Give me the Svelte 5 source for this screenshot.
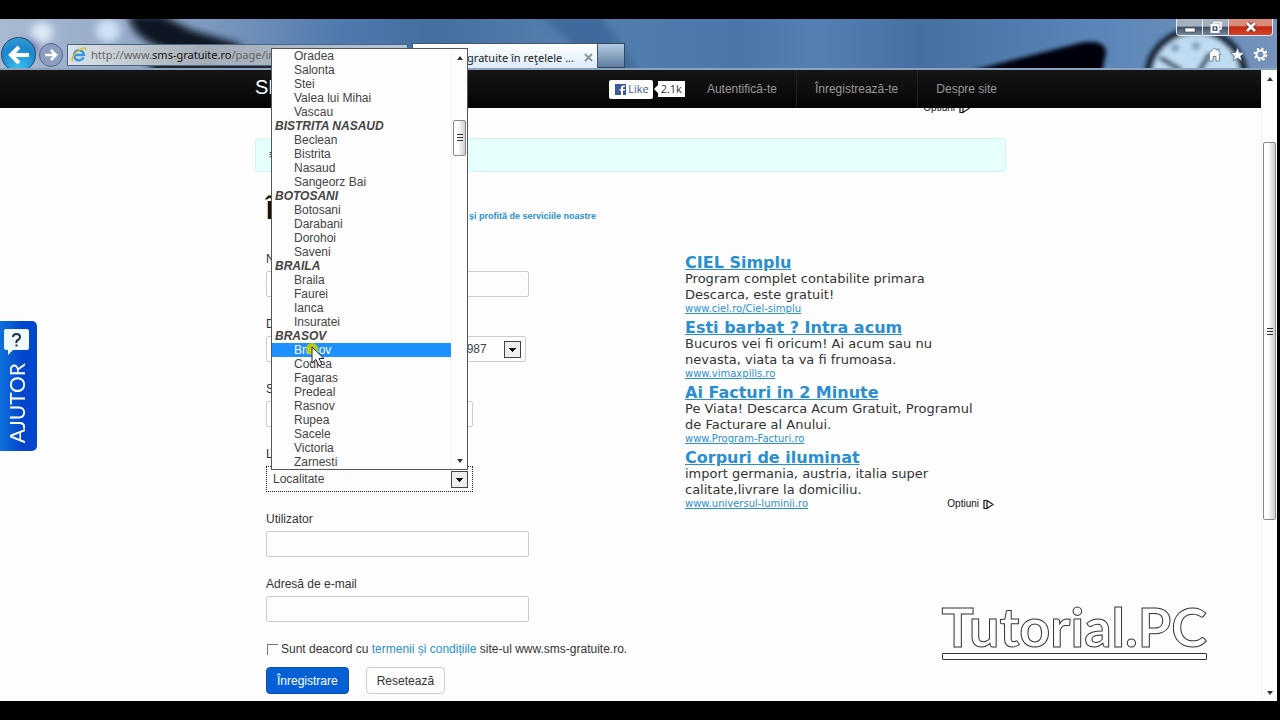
<script lang="ts">
  const localities = [
    { group: '', items: ['Oradea', 'Salonta', 'Stei', 'Valea lui Mihai', 'Vascau'] },
    { group: 'BISTRITA NASAUD', items: ['Beclean', 'Bistrita', 'Nasaud', 'Sangeorz Bai'] },
    { group: 'BOTOSANI', items: ['Botosani', 'Darabani', 'Dorohoi', 'Saveni'] },
    { group: 'BRAILA', items: ['Braila', 'Faurei', 'Ianca', 'Insuratei'] },
    { group: 'BRASOV', items: ['Brasov', 'Codlea', 'Fagaras', 'Predeal', 'Rasnov', 'Rupea', 'Sacele', 'Victoria', 'Zarnesti'] },
  ];

  const ads = [
    { title: 'CIEL Simplu', lines: ['Program complet contabilite primara', 'Descarca, este gratuit!'], url: 'www.ciel.ro/Ciel-simplu' },
    { title: 'Esti barbat ? Intra acum', lines: ['Bucuros vei fi oricum! Ai acum sau nu', 'nevasta, viata ta va fi frumoasa.'], url: 'www.vimaxpills.ro' },
    { title: 'Ai Facturi in 2 Minute', lines: ['Pe Viata! Descarca Acum Gratuit, Programul', 'de Facturare al Anului.'], url: 'www.Program-Facturi.ro' },
    { title: 'Corpuri de iluminat', lines: ['import germania, austria, italia super', 'calitate,livrare la domiciliu.'], url: 'www.universul-luminii.ro' },
  ];

  let selected = $state('Brasov');
</script>

{#snippet adChoices()}
  <span class="choices">
    Optiuni
    <svg width="11" height="11" viewBox="0 0 11 11" fill="none" stroke="#111" stroke-width="1.2">
      <path d="M3.500 9.500H1v-8h2M4 1.500l6 4-6 4z" />
    </svg>
  </span>
{/snippet}

<div class="screen">
  <div class="window">
    <header class="chrome">
      <svg class="wallpaper" viewBox="0 0 1277 51" preserveAspectRatio="none" aria-hidden="true">
        <defs>
          <linearGradient id="sky">
            <stop offset="0" stop-color="#a9b9d0" />
            <stop offset=".12" stop-color="#8fa6c6" />
            <stop offset=".27" stop-color="#4d79ac" />
            <stop offset=".34" stop-color="#44709f" />
            <stop offset=".45" stop-color="#5580b0" />
            <stop offset=".58" stop-color="#4a77a8" />
            <stop offset=".64" stop-color="#5580b2" />
            <stop offset=".72" stop-color="#4570a0" />
            <stop offset=".86" stop-color="#5a86b8" />
            <stop offset="1" stop-color="#7593bb" />
          </linearGradient>
          <filter id="soft" x="-20%" y="-50%" width="140%" height="200%"><feGaussianBlur stdDeviation="4" /></filter>
          <filter id="softer" x="-20%" y="-50%" width="140%" height="200%"><feGaussianBlur stdDeviation="2" /></filter>
        </defs>
        <rect width="1277" height="51" fill="url(#sky)" />
        <g filter="url(#soft)">
          <circle cx="42" cy="14" r="11" fill="#dce8f6" />
          <circle cx="108" cy="12" r="12" fill="#cfe2f5" />
          <circle cx="30" cy="28" r="8" fill="#6f67ab" />
          <path d="M128-4h34l30 16 48 14v8l-70-2q-36-8-42-36z" fill="#0c1522" />
          <path d="M150 40h150v20H150z" fill="#1a2635" />
          <path d="M540-5h60l40 60H600z" fill="#416b9b" />
        </g>
        <g filter="url(#softer)">
          <path d="M970 54l110-29q25-5 26 10l-4 20z" fill="#02050a" />
          <circle cx="1196" cy="60" r="48" fill="#bfdcf2" stroke="#1c2a3c" stroke-width="8" />
          <path d="M1160 40l22 14M1210 36l-12 20" stroke="#31455d" stroke-width="5" />
          <circle cx="1175" cy="30" r="4" fill="#7a99b8" />
          <circle cx="1196" cy="28" r="4" fill="#7a99b8" />
        </g>
      </svg>

      <div class="titlebar">
        <div class="controls">
          <button aria-label="Minimizare"><svg width="12" height="12" viewBox="0 0 12 12"><path d="M1 7h10v4H1z" fill="#fff" stroke="#445" stroke-width=".7" /></svg></button>
          <button aria-label="Restaurare"><svg width="12" height="12" viewBox="0 0 12 12" fill="none"><path d="M4 3V1.500h7V8H9" stroke="#fff" stroke-width="1.500" /><path d="M1.500 4h7v7h-7z" stroke="#fff" stroke-width="2" /><path d="M4 6.500h2v2H4z" fill="#fff" /></svg></button>
          <button class="close" aria-label="Închidere"><svg width="12" height="12" viewBox="0 0 12 12"><path d="M2 2l8 8M10 2l-8 8" stroke="#6b2218" stroke-width="4.500" /><path d="M2 2l8 8M10 2l-8 8" stroke="#fff" stroke-width="2.800" /></svg></button>
        </div>
      </div>

      <div class="toolbar">
        <button class="back" aria-label="Înapoi">
          <svg width="22" height="20" viewBox="0 0 22 20" fill="none" stroke="#fff" stroke-width="4"><path d="M11 2l-8 8 8 8M3 10h18" /></svg>
        </button>
        <button class="forward" aria-label="Înainte">
          <svg width="14" height="12" viewBox="0 0 14 12" fill="none" stroke="#fff" stroke-width="2.500"><path d="M7 1l5 5-5 5M12 6H1" /></svg>
        </button>
        <div class="address">
          <svg width="16" height="16" viewBox="0 0 16 16" fill="none">
            <path d="M12.500 10.500A5 5 0 1 1 13 8H4" stroke="#2f9be0" stroke-width="2.500" />
            <path d="M2 14.500C-1 13 4 5 9 2.500c4-2.500 6.500-2 5.500 1" stroke="#e5b92c" stroke-width="1.500" />
          </svg>
          <span>http://www.<b>sms-gratuite.ro</b>/page/inregistrare</span>
        </div>
        <div class="tab">
          <span>SMS-uri gratuite în reţelele ...</span>
          <button aria-label="Închide fila"><svg width="9" height="9" viewBox="0 0 9 9"><path d="M1 1l7 7M8 1L1 8" stroke="#8b9299" stroke-width="1.800" /></svg></button>
        </div>
        <button class="new-tab" aria-label="Filă nouă"></button>
        <div class="tools">
          <button aria-label="Acasă"><svg width="15" height="15" viewBox="0 0 15 15"><path d="M7.500 1L1 7.500h1.500V14h3.500V9.500h3V14h3.500V7.500H14L12 5.500V2h-2v1.500z" fill="#fff" stroke="#5b6f85" stroke-width=".8" /></svg></button>
          <button aria-label="Favorite"><svg width="15" height="15" viewBox="0 0 15 15"><path d="M7.500.8l1.900 4.700 4.900.2-3.800 3.200 1.300 4.900-4.300-2.800-4.300 2.800 1.300-4.900L.7 5.700l4.900-.2z" fill="#fff" stroke="#5b6f85" stroke-width=".7" /></svg></button>
          <button aria-label="Instrumente"><svg width="15" height="15" viewBox="0 0 15 15" fill="none"><circle cx="7.500" cy="7.500" r="6" stroke="#5b6f85" stroke-width="3" stroke-dasharray="2.700 2.012" /><circle cx="7.500" cy="7.500" r="6" stroke="#fff" stroke-width="2" stroke-dasharray="2.400 2.312" /><circle cx="7.500" cy="7.500" r="4" stroke="#fff" stroke-width="2.200" /></svg></button>
        </div>
      </div>
    </header>

    <div class="viewport">
      <main class="page">
        <nav>
          <div class="nav-inner">
            <a class="brand" href="#acasa">SMS Gratuite</a>
            <div class="like">
              <button>
                <svg width="11" height="11" viewBox="0 0 11 11"><path d="M0 0h11v11H0z" fill="#3b5998" /><path d="M10 3H9Q8 3 8 4v1h2v1.500H8V11H6V6.500H4.500V5H6V3.500Q6 1.500 8.500 1.500H10z" fill="#fff" /></svg>
                Like
              </button>
              <span>2.1k</span>
            </div>
            <a class="first" href="#autentificare">Autentifică-te</a>
            <a href="#inregistrare">Înregistrează-te</a>
            <a href="#despre">Despre site</a>
          </div>
        </nav>

        <div class="container">
          <div class="top-ad">{@render adChoices()}</div>
          <div class="notice">≡</div>

          <div class="columns">
            <form onsubmit={e => e.preventDefault()}>
              <h1>Înregistrare <small>și profită de serviciile noastre</small></h1>

              <div class="field">
                <label for="name">Nume</label>
                <input id="name" type="text">
              </div>
              <div class="field">
                <label for="year">Data nașterii</label>
                <div class="dates">
                  <div class="select"><select aria-label="Zi"><option>1</option></select></div>
                  <div class="select"><select aria-label="Luna"><option>Mai</option></select></div>
                  <div class="select"><select id="year"><option>1987</option></select></div>
                </div>
              </div>
              <div class="field">
                <label for="sex">Sex</label>
                <div class="select"><select id="sex"><option>Sex</option></select></div>
              </div>
              <div class="field">
                <label for="city">Localitate</label>
                <div class="select open">
                  <select id="city"><option>Localitate</option></select>
                  <div class="popup">
                    <ul role="listbox" aria-label="Localitate">
                      {#each localities as { group, items }}
                        {#if group}<li class="group" role="presentation">{group}</li>{/if}
                        {#each items as item}
                          <li role="option" aria-selected={item === selected} onmouseenter={() => selected = item}>
                            {item}
                            {#if item === 'Brasov'}
                              <svg class="cursor" width="26" height="28" viewBox="0 0 26 28">
                                <circle cx="8" cy="8" r="6" fill="#c3cf00" opacity=".9" />
                                <path d="M8 6v16l4-3.500 3 6.500 3-1.500-3-6h5z" fill="#fff" stroke="#223" stroke-width="1" />
                              </svg>
                            {/if}
                          </li>
                        {/each}
                      {/each}
                    </ul>
                    <div class="scroll">
                      <i class="up"></i>
                      <div class="track"><div class="thumb" style="top: 15%; height: 9%"></div></div>
                      <i class="down"></i>
                    </div>
                  </div>
                </div>
              </div>
              <div class="field">
                <label for="user">Utilizator</label>
                <input id="user" type="text">
              </div>
              <div class="field">
                <label for="email">Adresă de e-mail</label>
                <input id="email" type="text">
              </div>

              <div class="terms">
                <input id="terms" type="checkbox">
                <label for="terms">Sunt deacord cu <a href="#termeni">termenii și condițiile</a> site-ul www.sms-gratuite.ro.</label>
              </div>
              <div class="buttons">
                <button class="primary" type="submit">Înregistrare</button>
                <button type="reset">Resetează</button>
              </div>
            </form>

            <aside>
              {#each ads as ad, i}
                <div class="ad">
                  <a class="title" href="#reclama">{ad.title}</a>
                  {#each ad.lines as line}<p>{line}</p>{/each}
                  <div class="ad-foot">
                    <a href="#reclama">{ad.url}</a>
                    {#if i === ads.length - 1}{@render adChoices()}{/if}
                  </div>
                </div>
              {/each}
            </aside>
          </div>
        </div>

        <button class="help">
          <svg width="25" height="26" viewBox="0 0 25 26"><path d="M2 0h21q2 0 2 2v17q0 2-2 2H9l-5 5v-5H2q-2 0-2-2V2q0-2 2-2z" fill="#eefaff" /><path d="M9 8q0-3 3.500-3T16 8q0 2-2 3t-1.500 3M12.500 15.500v2" fill="none" stroke="#26303c" stroke-width="2" /></svg>
          <span>AJUTOR</span>
        </button>

        <div class="watermark">Tutorial.PC</div>
      </main>

      <div class="scroll">
        <i class="up"></i>
        <div class="track"><div class="thumb" style="top: 10%; height: 62%"></div></div>
        <i class="down"></i>
      </div>
    </div>
  </div>
</div>

<style>
  :global(body) {
    background: #000;
  }

  .screen {
    box-sizing: border-box;
    min-height: 100vh;
    padding: 19px 3px 19px 0;
    display: flex;
    background: #000;
    font: 13px/20px "Liberation Sans", Arial, sans-serif;
    color: #333;
  }

  .screen :global(*),
  .screen :global(*::before),
  .screen :global(*::after) {
    box-sizing: border-box;
  }

  .window {
    flex: 1;
    min-width: 0;
    display: flex;
    flex-direction: column;
  }

  button {
    padding: 0;
    border: 0;
    background: none;
    font: inherit;
    color: inherit;
  }

  svg {
    display: block;
    flex: none;
  }

  a {
    color: #2a8fd0;
    text-decoration: none;
  }

  /* browser chrome */
  .chrome {
    position: relative;
    overflow: hidden;
    border-bottom: 2px solid #8ba3bd;
    font-family: "Noto Sans", sans-serif;
  }

  .wallpaper {
    position: absolute;
    width: 100%;
    height: 100%;
  }

  .titlebar {
    position: relative;
    height: 24px;
    display: flex;
    justify-content: flex-end;
    padding-right: 4px;
  }

  .controls {
    display: flex;
    height: 17px;
    border: 1px solid #e3ebf3;
    border-top: 0;
    border-radius: 0 0 4px 4px;
    overflow: hidden;
  }

  .controls button {
    width: 26px;
    display: grid;
    place-items: center;
    border-right: 1px solid #dbe4ee;
    background: linear-gradient(#a6b1c0 45%, #3f4d61 50%, #77889e);
  }

  .controls .close {
    width: 43px;
    border: 0;
    background: linear-gradient(#dc8c7c 40%, #c02a10 50%, #d8432a);
  }

  .toolbar {
    position: relative;
    height: 25px;
    padding-bottom: 2px;
    display: flex;
    align-items: center;
  }

  .back,
  .forward {
    flex: none;
    display: grid;
    place-items: center;
    border-radius: 50%;
  }

  .back {
    width: 35px;
    height: 35px;
    margin-left: 1px;
    border: 1px solid #25486c;
    background: radial-gradient(circle at 50% 90%, #38c0f4, #1c86cc 60%, #3da2dc);
  }

  .forward {
    width: 24px;
    height: 24px;
    margin: 0 4px 0 3px;
    border: 1px solid #56688c;
    background: #8c9dbf;
  }

  .address {
    width: 341px;
    height: 22px;
    padding: 0 3px;
    display: flex;
    align-items: center;
    gap: 4px;
    border: 1px solid #4c6480;
    background: linear-gradient(90deg, #dde3ea, #a4adb6 40%, #b4c6d8);
    color: #666;
    font-size: 11px;
    white-space: nowrap;
    overflow: hidden;
  }

  .address b {
    font-weight: 400;
    color: #111;
  }

  .tab {
    align-self: flex-start;
    width: 186px;
    height: 25px;
    margin-left: 4px;
    padding: 3px 4px 0 0;
    display: flex;
    align-items: center;
    justify-content: flex-end;
    gap: 10px;
    border: 1px solid #43566c;
    border-width: 1px 1px 0;
    background: linear-gradient(#fff, #dcebfa);
    color: #222;
    font-size: 11px;
    white-space: nowrap;
  }

  .new-tab {
    align-self: flex-start;
    width: 27px;
    height: 25px;
    border: 1px solid #33475f;
    border-left: 0;
    background: linear-gradient(#b5cbe2, #5f7e9f);
  }

  .tools {
    flex: 1;
    display: flex;
    justify-content: flex-end;
    gap: 8px;
    padding-right: 9px;
  }

  /* scrollable area */
  .viewport {
    flex: 1;
    display: flex;
    background: #fdfdfd;
  }

  .page {
    position: relative;
    flex: 1;
    min-width: 0;
  }

  .scroll {
    flex: none;
    width: 16px;
    display: flex;
    flex-direction: column;
    align-items: center;
    padding: 7px 1px 6px;
    border-left: 1px solid #f3f3f3;
    background: #fdfdfd;
  }

  .up,
  .down {
    border: 3px solid transparent;
  }

  .up {
    border-top: 0;
    border-bottom: 4px solid #333;
  }

  .down {
    border-bottom: 0;
    border-top: 4px solid #333;
  }

  .track {
    position: relative;
    flex: 1;
    width: 100%;
  }

  .thumb {
    position: absolute;
    width: 100%;
    display: grid;
    place-items: center;
    border: 1px solid #888;
    border-radius: 2px;
    background: linear-gradient(90deg, #fff 35%, #cfcfd2);
  }

  .thumb::after {
    content: "";
    width: 6px;
    height: 7px;
    background: repeating-linear-gradient(#333 0 1px, transparent 1px 3px);
  }

  nav {
    position: relative;
    z-index: 1;
    height: 38px;
    background: linear-gradient(#161616, #040404);
  }

  .nav-inner {
    max-width: 771px;
    height: 100%;
    margin: 0 auto;
    padding: 0 0 0 10px;
    display: flex;
    align-items: center;
  }

  nav a {
    height: 100%;
    padding: 0 19px 0 18px;
    border-left: 1px solid #222;
    color: #999;
    font-size: 12px;
    line-height: 38px;
  }

  nav a.brand {
    flex: 1;
    padding: 0;
    border: 0;
    color: #fff;
    font-size: 20px;
    line-height: 34px;
  }

  nav a.first {
    border: 0;
  }

  .like {
    display: flex;
    align-items: center;
    gap: 5px;
    margin-right: 4px;
    font: 11px/16px "Open Sans", sans-serif;
  }

  .like button {
    height: 19px;
    padding: 0 4px 0 6px;
    display: flex;
    align-items: center;
    gap: 2px;
    border-radius: 2px;
    background: #fff;
    color: #3b5998;
  }

  .like span {
    position: relative;
    padding: 0 3px;
    background: #fff;
  }

  .like span::before {
    content: "";
    position: absolute;
    left: -4px;
    top: 4px;
    border: 4px solid transparent;
    border-left: 0;
    border-right-color: #fff;
  }

  .container {
    max-width: 751px;
    margin: -8px auto 0;
  }

  .choices {
    display: flex;
    align-items: center;
    gap: 4px;
    color: #111;
    font-size: 10px;
    line-height: 16px;
  }

  .top-ad {
    display: flex;
    justify-content: flex-end;
    padding-right: 36px;
  }

  .notice {
    height: 34px;
    margin-top: 22px;
    padding: 6px 13px;
    border: 1px solid #d4f3f0;
    border-radius: 3px;
    background: #e5fffd;
  }

  .columns {
    display: flex;
    justify-content: space-between;
    padding: 18px 0 0 11px;
  }

  h1 {
    width: 330px;
    height: 40px;
    margin: 0 0 19px;
    display: flex;
    align-items: baseline;
    justify-content: space-between;
    color: #111;
    font-size: 26px;
    line-height: 40px;
    white-space: nowrap;
  }

  h1 small {
    color: #2a8fd0;
    font-size: 9px;
  }

  .field {
    margin-bottom: 17px;
  }

  .field label {
    display: block;
    margin-bottom: 2px;
    font-size: 12px;
  }

  .field input,
  select {
    display: block;
    width: 263px;
    height: 26px;
    padding: 0 6px;
    border: 1px solid #ccc;
    border-radius: 2px;
    background: #fdfdfd;
    color: #444;
    font: inherit;
    font-size: 12px;
    appearance: none;
  }

  .select {
    position: relative;
    width: 207px;
  }

  .select select {
    width: 100%;
  }

  .select::after {
    content: "";
    position: absolute;
    top: 5px;
    right: 5px;
    width: 17px;
    height: 17px;
    border: 1px solid #444;
    background:
      linear-gradient(#111, #111) 50% 6px / 7px 1px no-repeat,
      linear-gradient(#111, #111) 50% 7px / 5px 1px no-repeat,
      linear-gradient(#111, #111) 50% 8px / 3px 1px no-repeat,
      linear-gradient(#111, #111) 50% 9px / 1px 1px no-repeat,
      #eee;
    pointer-events: none;
  }

  .open > select {
    border: 1px dotted #222;
    border-radius: 0;
  }

  .dates {
    width: 260px;
    display: grid;
    grid-template-columns: 1fr 1fr 73px;
    gap: 8px;
  }

  .dates .select {
    width: auto;
  }

  .popup {
    position: absolute;
    z-index: 2;
    left: 5px;
    bottom: 22px;
    width: 197px;
    display: flex;
    border: 1px solid #555;
    background: #fdfdfd;
  }

  ul {
    flex: 1;
    margin: 0;
    padding: 0;
    list-style: none;
    color: #444;
    font-size: 12px;
    line-height: 14px;
  }

  li {
    position: relative;
    padding-left: 22px;
  }

  li[aria-selected="true"] {
    background: #1e90ff;
    color: #fff;
  }

  li.group {
    padding-left: 3px;
    font-style: italic;
    font-weight: 700;
  }

  .cursor {
    position: absolute;
    z-index: 1;
    left: 32px;
    top: -2px;
  }

  .terms {
    display: flex;
    align-items: center;
    gap: 3px;
    font-size: 12px;
    white-space: nowrap;
  }

  .terms input {
    width: 11px;
    height: 11px;
    margin: 0 0 0 1px;
    appearance: none;
    border: solid #777;
    border-width: 1px 0 0 1px;
  }

  .buttons {
    display: flex;
    gap: 17px;
    margin-top: 8px;
  }

  .buttons button {
    height: 27px;
    padding: 0 10px;
    border: 1px solid #ccc;
    border-radius: 4px;
    font-size: 12px;
  }

  .buttons .primary {
    border-color: #0a4fb5;
    background: #0560d6;
    color: #fff;
  }

  aside {
    width: 321px;
    padding-top: 64px;
    font: 13px/16px "DejaVu Sans", Verdana, sans-serif;
  }

  .ad {
    margin-bottom: 4px;
  }

  .ad .title {
    display: block;
    font-size: 16px;
    font-weight: 700;
    line-height: 17px;
    text-decoration: underline;
  }

  .ad p {
    margin: 0;
    white-space: nowrap;
  }

  .ad-foot {
    display: flex;
    justify-content: space-between;
    height: 12px;
    padding-right: 12px;
    font-size: 10px;
    line-height: 12px;
  }

  .ad-foot a {
    text-decoration: underline;
  }

  .ad-foot .choices {
    font-family: "Liberation Sans", Arial, sans-serif;
  }

  .help {
    position: absolute;
    left: 0;
    top: 251px;
    width: 37px;
    height: 130px;
    padding: 8px 8px 8px 4px;
    display: flex;
    flex-direction: column;
    align-items: center;
    justify-content: space-between;
    border-radius: 0 5px 5px 0;
    background: linear-gradient(90deg, #0f70dc, #0345cc 60%);
    color: #fff;
    font: 21px/24px Lato, sans-serif;
  }

  .help span {
    writing-mode: vertical-rl;
    transform: rotate(180deg);
  }

  .watermark {
    position: absolute;
    right: 54px;
    bottom: 41px;
    color: #fdfdfd;
    font: 700 54px/52px Lato, sans-serif;
    -webkit-text-stroke: 1px #333;
  }

  .watermark::after {
    content: "";
    display: block;
    height: 7px;
    border: 1px solid #333;
    border-radius: 1px;
  }
</style>
